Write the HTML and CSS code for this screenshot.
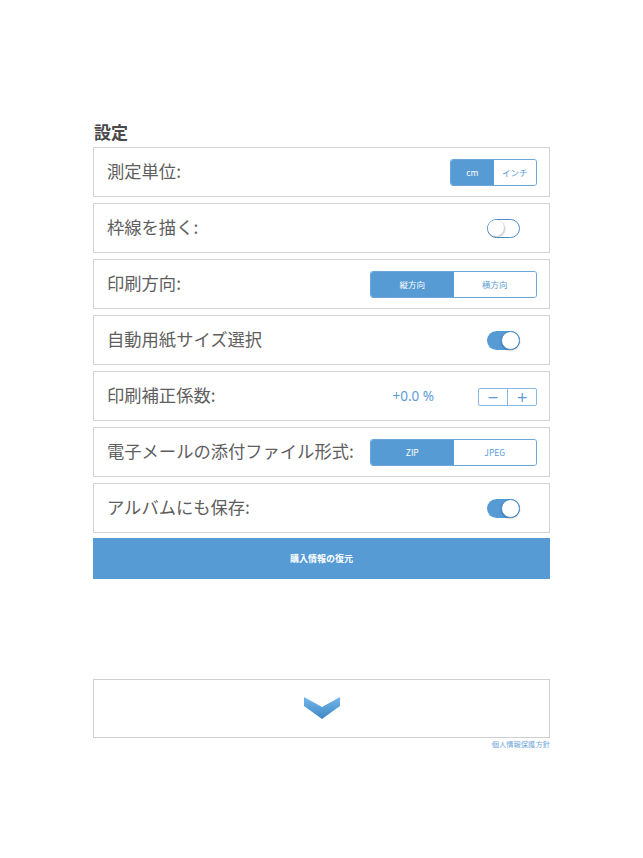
FILE: index.html
```html
<!DOCTYPE html>
<html lang="ja">
<head>
<meta charset="utf-8">
<title>設定</title>
<link rel="stylesheet" href="styles.css">
</head>
<body>
<div class="page">
  <h1 class="title">設定</h1>

  <div class="row">
    <span class="label">測定単位:</span>
    <div class="seg seg-small">
      <span class="seg-item on">cm</span>
      <span class="seg-item">インチ</span>
    </div>
  </div>

  <div class="row">
    <span class="label">枠線を描く:</span>
    <span class="toggle off"><span class="knob"></span></span>
  </div>

  <div class="row">
    <span class="label">印刷方向:</span>
    <div class="seg seg-wide">
      <span class="seg-item on">縦方向</span>
      <span class="seg-item">横方向</span>
    </div>
  </div>

  <div class="row">
    <span class="label">自動用紙サイズ選択</span>
    <span class="toggle on"><span class="knob"></span></span>
  </div>

  <div class="row">
    <span class="label">印刷補正係数:</span>
    <div class="right-group">
      <span class="value">+0.0 %</span>
      <div class="stepper">
        <span class="step">−</span>
        <span class="step">+</span>
      </div>
    </div>
  </div>

  <div class="row">
    <span class="label">電子メールの添付ファイル形式:</span>
    <div class="seg seg-wide">
      <span class="seg-item on">ZIP</span>
      <span class="seg-item">JPEG</span>
    </div>
  </div>

  <div class="row">
    <span class="label">アルバムにも保存:</span>
    <span class="toggle on"><span class="knob"></span></span>
  </div>

  <div class="restore">購入情報の復元</div>

  <div class="more">
    <svg class="chevron" width="36" height="22" viewBox="0 0 36 22">
      <defs>
        <linearGradient id="cg" x1="0" y1="0" x2="0" y2="1">
          <stop offset="0" stop-color="#72b8ea"/>
          <stop offset="1" stop-color="#3f86c4"/>
        </linearGradient>
      </defs>
      <polygon points="0,0 18,10 36,0 36,9 18,22 0,9" fill="url(#cg)"/>
    </svg>
  </div>
  <div class="privacy">個人情報保護方針</div>
</div>
</body>
</html>
```
FILE: styles.css
```css
html, body {
  margin: 0;
  padding: 0;
  background: #ffffff;
}

body {
  font-family: "Noto Sans CJK JP", "Noto Sans", sans-serif;
  color: #555555;
}

.page {
  width: 457px;
  margin-left: 93px;
  padding-top: 122px;
}

.title {
  margin: 0 0 5px 1px;
  font-size: 17px;
  line-height: 20px;
  font-weight: 700;
  color: #4a4a4a;
}

.row {
  box-sizing: border-box;
  height: 50px;
  margin-bottom: 6px;
  border: 1px solid #d3d3d3;
  display: flex;
  align-items: center;
  justify-content: space-between;
  padding: 0 12px 0 13px;
}

.label {
  font-size: 17.3px;
  line-height: 20px;
  font-weight: 400;
  color: #5e5e5e;
  margin-top: -2px;
}

.seg {
  display: flex;
  height: 27px;
  box-sizing: border-box;
  border: 1px solid #6aa6da;
  border-radius: 3px;
  overflow: hidden;
}

.seg-small { width: 87px; }
.seg-wide { width: 167px; }

.seg-item {
  flex: 1;
  display: flex;
  align-items: center;
  justify-content: center;
  font-size: 8.5px;
  font-weight: 400;
  color: #5b9bd5;
  background: #ffffff;
}

.seg-item.on {
  background: #569bd4;
  color: #ffffff;
}

.toggle {
  position: relative;
  box-sizing: border-box;
  width: 33px;
  height: 19px;
  border-radius: 10px;
  margin-right: 17px;
  margin-top: 1px;
}

.toggle.off {
  border: 1.5px solid #4b8cc7;
  background: #ffffff;
}

.toggle.on {
  background: #569bd4;
}

.knob {
  position: absolute;
  top: 0;
  width: 16px;
  height: 16px;
  border-radius: 50%;
  background: #ffffff;
}

.toggle.off .knob {
  left: 0;
  box-shadow: 1px 1px 2px rgba(0, 0, 0, 0.25);
}

.toggle.on .knob {
  right: 0;
  top: 0;
  width: 19px;
  height: 19px;
  box-sizing: border-box;
  border: 1px solid #4b8cc7;
  box-shadow: 0 1px 2px rgba(0, 0, 0, 0.2);
}

.right-group {
  display: flex;
  align-items: center;
}

.value {
  font-family: "Noto Sans", sans-serif;
  font-size: 13.5px;
  font-weight: 400;
  color: #5b9bd5;
  margin-right: 44px;
  margin-top: -1px;
}

.stepper {
  display: flex;
  width: 59px;
  height: 18px;
  box-sizing: border-box;
  border: 1px solid #8ab7e2;
  border-radius: 2px;
  margin-top: 1px;
}

.step {
  flex: 1;
  display: flex;
  align-items: center;
  justify-content: center;
  font-family: "DejaVu Sans", sans-serif;
  font-size: 14px;
  line-height: 1;
  color: #5b9bd5;
}

.step + .step {
  border-left: 1px solid #8ab7e2;
}

.restore {
  height: 41px;
  margin-top: -1px;
  background: #569bd4;
  color: #ffffff;
  font-size: 9px;
  font-weight: 700;
  display: flex;
  align-items: center;
  justify-content: center;
}

.more {
  box-sizing: border-box;
  margin-top: 100px;
  height: 59px;
  border: 1px solid #cfcfcf;
  display: flex;
  align-items: center;
  justify-content: center;
}

.chevron {
  display: block;
  margin-top: -2px;
}

.privacy {
  text-align: right;
  font-size: 7.3px;
  line-height: 10px;
  color: #6ea6da;
  margin-top: 1px;
}
```
